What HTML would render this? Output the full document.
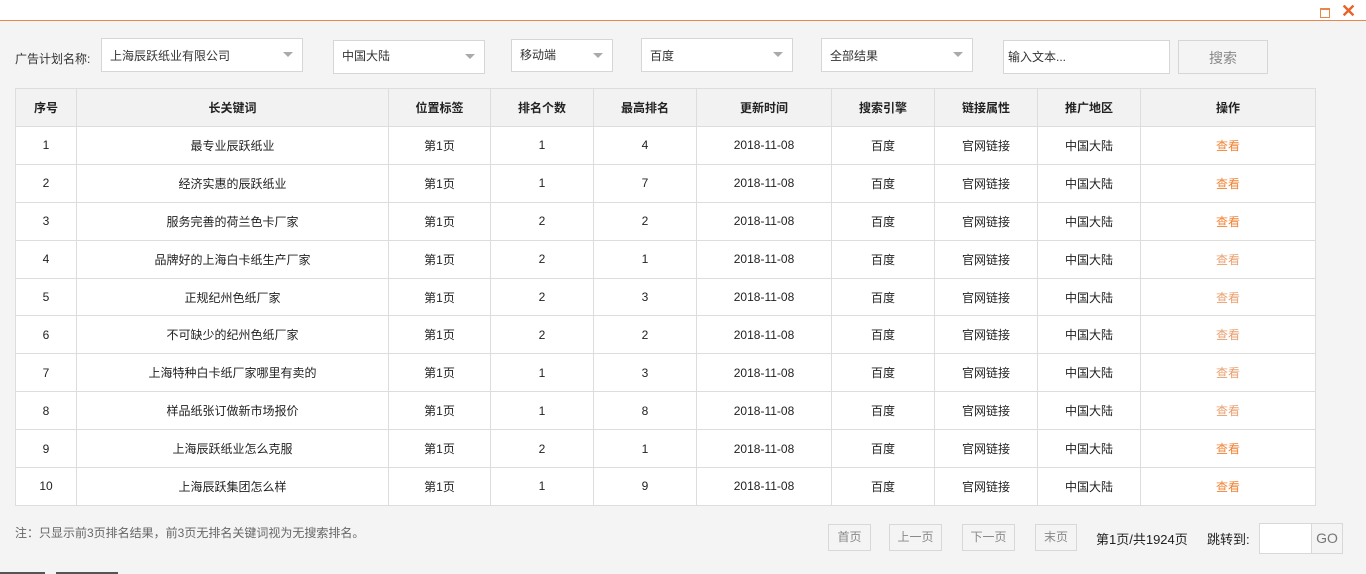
<!DOCTYPE html>
<html><head><meta charset="utf-8"><style>
*{box-sizing:border-box;margin:0;padding:0}
body{width:1366px;height:574px;overflow:hidden;background:#f4f4f4;font-family:"Liberation Sans","Noto Sans CJK SC",sans-serif;font-size:12px;color:#222;position:relative}
.top{position:absolute;left:0;top:0;width:1366px;height:21px;background:#fff;border-bottom:1px solid #e8874a}
.abs{position:absolute}
.sel{position:absolute;background:#fff;border:1px solid #d6d6d6;height:34px;padding-left:8px;line-height:30px;color:#333}
.sel:after{content:"";position:absolute;right:9px;top:13px;border-left:5px solid transparent;border-right:5px solid transparent;border-top:5px solid #aaa}
table{position:absolute;left:15px;top:88px;border-collapse:collapse;background:#fff;width:1301px}
td,th{border:1px solid #ddd;text-align:center;height:37.9px;font-size:12px}
th{background:#f2f2f2;font-weight:bold;height:38px}
td.o{color:#f08336}
.pb{position:absolute;top:524px;height:27px;border:1px solid #d8d8d8;color:#888;line-height:25px;text-align:center;font-size:12px}
</style></head><body>
<div class="top"></div>
<div class="abs" style="left:1320px;top:8px;width:10px;height:10px;border:1px solid #e8874a;border-top-width:2px"></div>
<div class="abs" style="left:1341px;top:1px;color:#e8632a;font-size:18px;font-weight:bold;line-height:20px">✕</div>
<div class="abs" style="left:15px;top:50px;color:#333">广告计划名称:</div>
<div class="sel" style="left:101px;top:38px;width:202px;line-height:34px">上海辰跃纸业有限公司</div>
<div class="sel" style="left:333px;top:40px;width:152px">中国大陆</div>
<div class="sel" style="left:511px;top:39px;width:102px;height:33px">移动端</div>
<div class="sel" style="left:641px;top:38px;width:152px;line-height:34px">百度</div>
<div class="sel" style="left:821px;top:38px;width:152px;line-height:34px">全部结果</div>
<div class="abs" style="left:1003px;top:40px;width:167px;height:34px;background:#fff;border:1px solid #d6d6d6;padding-left:4px;line-height:32px;color:#333">输入文本...</div>
<div class="abs" style="left:1178px;top:40px;width:90px;height:34px;border:1px solid #d6d6d6;text-align:center;line-height:34px;color:#888;font-size:14px">搜索</div>
<table>
<tr><th style="width:61px">序号</th><th style="width:312px">长关键词</th><th style="width:102px">位置标签</th><th style="width:103px">排名个数</th><th style="width:103px">最高排名</th><th style="width:135px">更新时间</th><th style="width:103px">搜索引擎</th><th style="width:103px">链接属性</th><th style="width:103px">推广地区</th><th>操作</th></tr>
<tr><td>1</td><td>最专业辰跃纸业</td><td>第1页</td><td>1</td><td>4</td><td>2018-11-08</td><td>百度</td><td>官网链接</td><td>中国大陆</td><td class="o">查看</td></tr>
<tr><td>2</td><td>经济实惠的辰跃纸业</td><td>第1页</td><td>1</td><td>7</td><td>2018-11-08</td><td>百度</td><td>官网链接</td><td>中国大陆</td><td class="o">查看</td></tr>
<tr><td>3</td><td>服务完善的荷兰色卡厂家</td><td>第1页</td><td>2</td><td>2</td><td>2018-11-08</td><td>百度</td><td>官网链接</td><td>中国大陆</td><td class="o">查看</td></tr>
<tr><td>4</td><td>品牌好的上海白卡纸生产厂家</td><td>第1页</td><td>2</td><td>1</td><td>2018-11-08</td><td>百度</td><td>官网链接</td><td>中国大陆</td><td class="o" style="color:#e8a070">查看</td></tr>
<tr><td>5</td><td>正规纪州色纸厂家</td><td>第1页</td><td>2</td><td>3</td><td>2018-11-08</td><td>百度</td><td>官网链接</td><td>中国大陆</td><td class="o" style="color:#e8a070">查看</td></tr>
<tr><td>6</td><td>不可缺少的纪州色纸厂家</td><td>第1页</td><td>2</td><td>2</td><td>2018-11-08</td><td>百度</td><td>官网链接</td><td>中国大陆</td><td class="o" style="color:#e8a070">查看</td></tr>
<tr><td>7</td><td>上海特种白卡纸厂家哪里有卖的</td><td>第1页</td><td>1</td><td>3</td><td>2018-11-08</td><td>百度</td><td>官网链接</td><td>中国大陆</td><td class="o" style="color:#e8a070">查看</td></tr>
<tr><td>8</td><td>样品纸张订做新市场报价</td><td>第1页</td><td>1</td><td>8</td><td>2018-11-08</td><td>百度</td><td>官网链接</td><td>中国大陆</td><td class="o" style="color:#e8a070">查看</td></tr>
<tr><td>9</td><td>上海辰跃纸业怎么克服</td><td>第1页</td><td>2</td><td>1</td><td>2018-11-08</td><td>百度</td><td>官网链接</td><td>中国大陆</td><td class="o">查看</td></tr>
<tr><td>10</td><td>上海辰跃集团怎么样</td><td>第1页</td><td>1</td><td>9</td><td>2018-11-08</td><td>百度</td><td>官网链接</td><td>中国大陆</td><td class="o">查看</td></tr>
</table>
<div class="abs" style="left:15px;top:524px;color:#666">注：只显示前3页排名结果，前3页无排名关键词视为无搜索排名。</div>
<div class="pb" style="left:828px;width:43px">首页</div>
<div class="pb" style="left:889px;width:53px">上一页</div>
<div class="pb" style="left:962px;width:53px">下一页</div>
<div class="pb" style="left:1035px;width:42px">末页</div>
<div class="abs" style="left:1096px;top:529px;font-size:13px;color:#222">第1页/共1924页</div>
<div class="abs" style="left:1207px;top:529px;font-size:13px;color:#222">跳转到:</div>
<div class="abs" style="left:1259px;top:523px;width:84px;height:31px;border:1px solid #d8d8d8;background:#fff"></div>
<div class="abs" style="left:1311px;top:524px;width:31px;height:29px;border-left:1px solid #d8d8d8;background:#f4f4f4;color:#777;font-size:14px;line-height:29px;text-align:center">GO</div>
<div class="abs" style="left:0;top:572px;width:45px;height:2px;background:#555"></div>
<div class="abs" style="left:56px;top:572px;width:62px;height:2px;background:#555"></div>
</body></html>
